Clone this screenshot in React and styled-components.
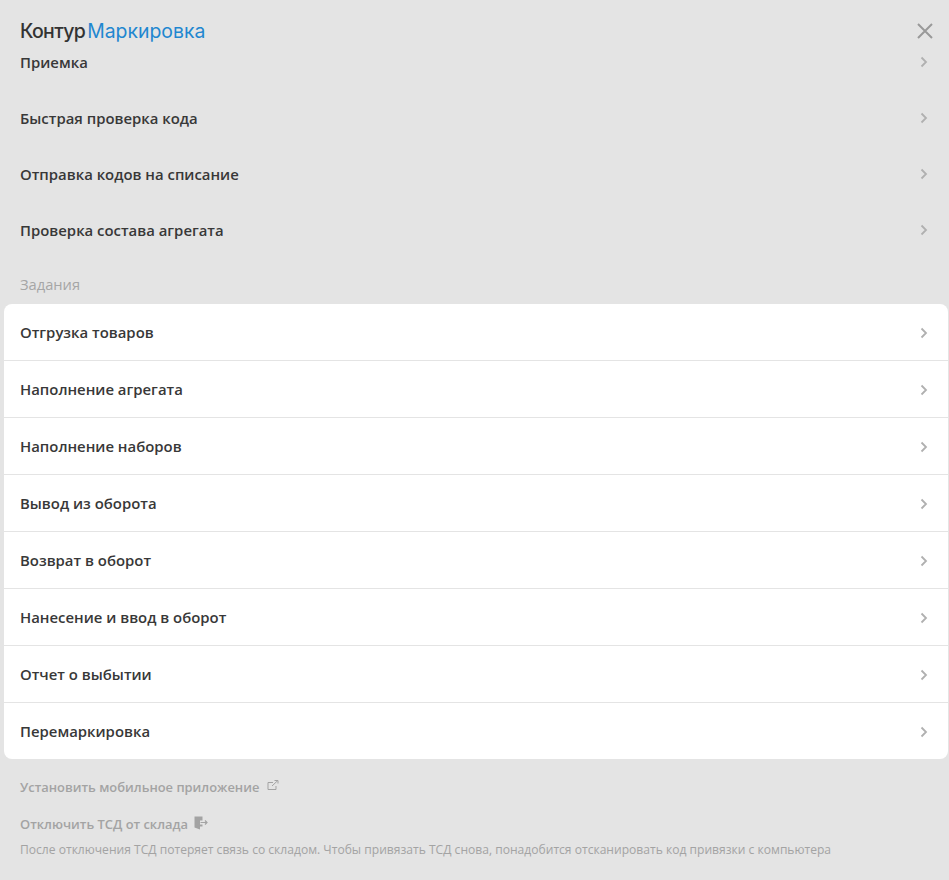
import React from 'react';
import styled, { createGlobalStyle } from 'styled-components';

const GlobalStyle = createGlobalStyle`
  html, body {
    margin: 0;
    padding: 0;
    background: #e4e4e4;
  }
  * { box-sizing: border-box; }
`;

const scanItems = ['Приемка', 'Быстрая проверка кода', 'Отправка кодов на списание', 'Проверка состава агрегата'];
const taskItems = [
  'Отгрузка товаров',
  'Наполнение агрегата',
  'Наполнение наборов',
  'Вывод из оборота',
  'Возврат в оборот',
  'Нанесение и ввод в оборот',
  'Отчет о выбытии',
  'Перемаркировка',
];

const Chevron = () => (
  <ChevronIcon width="8" height="12" viewBox="0 0 8 12" fill="none">
    <path d="M1.5 1.5 L6 6 L1.5 10.5" stroke="currentColor" strokeWidth="1.8" />
  </ChevronIcon>
);

const App = () => (
  <>
    <GlobalStyle />
    <Page>
      <Header>
        <Logo>
          <LogoBrand>Контур</LogoBrand>
          <LogoProduct>Маркировка</LogoProduct>
        </Logo>
        <CloseButton aria-label="Закрыть">
          <svg width="16" height="16" viewBox="0 0 16 16" fill="none">
            <path d="M1 1 L15 15 M15 1 L1 15" stroke="currentColor" strokeWidth="2" />
          </svg>
        </CloseButton>
      </Header>

      <PlainList>
        {scanItems.map((item) => (
          <Row key={item}>
            <RowTitle>{item}</RowTitle>
            <Chevron />
          </Row>
        ))}
      </PlainList>

      <SectionTitle>Задания</SectionTitle>

      <Card>
        {taskItems.map((item) => (
          <CardRow key={item}>
            <RowTitle>{item}</RowTitle>
            <Chevron />
          </CardRow>
        ))}
      </Card>

      <Footer>
        <FooterLink>
          Установить мобильное приложение
          <svg width="12" height="10" viewBox="0 0 12 10" fill="none">
            <path d="M6 2.5 H1 V9.5 H9 V6 M5 6 L10.5 0.8 M7.5 0.5 H11 V3.5" stroke="currentColor" strokeWidth="1" />
          </svg>
        </FooterLink>
        <FooterLink $second>
          Отключить ТСД от склада
          <svg width="14" height="14" viewBox="0 0 14 14" fill="none">
            <path d="M0.5 0.5 H8.5 V4.5 H6 V8.5 H8.5 V10.5 H6 V13.5 L0.5 11.5 Z" fill="currentColor" />
            <path d="M6.5 6.5 H13 M11 4.5 L13 6.5 L11 8.5" stroke="currentColor" strokeWidth="1.2" />
          </svg>
        </FooterLink>
        <Hint>После отключения ТСД потеряет связь со складом. Чтобы привязать ТСД снова, понадобится отсканировать код привязки с компьютера</Hint>
      </Footer>
    </Page>
  </>
);

const Page = styled.div`
  position: relative;
  height: 880px;
  overflow: hidden;
  padding-top: 34px;
  background: #e4e4e4;
  font-family: 'Open Sans', 'Noto Sans', sans-serif;
  color: #2b2b2b;
`;

const Header = styled.header`
  position: absolute;
  top: 0;
  left: 0;
  right: 0;
  height: 52px;
  padding: 9px 16px 0 20px;
  display: flex;
  align-items: center;
  justify-content: space-between;
  background: #e4e4e4;
`;

const Logo = styled.div`
  display: flex;
  align-items: baseline;
  gap: 2px;
  font-family: 'Inter', sans-serif;
`;

const LogoBrand = styled.span`
  font-size: 19.5px;
  font-weight: 500;
  letter-spacing: -0.65px;
  color: #333333;
`;

const LogoProduct = styled.span`
  font-size: 19.4px;
  font-weight: 400;
  color: #1f87d0;
`;

const CloseButton = styled.div`
  display: flex;
  color: #999999;
`;

const PlainList = styled.div`
  display: flex;
  flex-direction: column;
`;

const Row = styled.div`
  height: 56px;
  padding: 0 21px 0 20px;
  display: flex;
  align-items: center;
  justify-content: space-between;
`;

const RowTitle = styled.span`
  font-size: 14.9px;
  font-weight: 600;
  color: #383838;
`;

const ChevronIcon = styled.svg`
  color: #b0b0b0;
`;

const SectionTitle = styled.div`
  height: 46px;
  padding: 16px 20px 0;
  font-size: 14.7px;
  line-height: 20px;
  color: #a6a6a6;
`;

const Card = styled.div`
  margin: 0 1px 0 4px;
  border-radius: 8px;
  background: #ffffff;
  display: flex;
  flex-direction: column;
`;

const CardRow = styled(Row)`
  height: 57px;
  padding: 0 20px 0 16px;
  border-bottom: 1px solid #e4e4e4;

  ${ChevronIcon} {
    margin-top: 2px;
  }

  &:last-child {
    height: 56px;
    border-bottom: none;
  }
`;

const Footer = styled.div`
  padding: 18px 20px 0;
  display: flex;
  flex-direction: column;
`;

const FooterLink = styled.div`
  display: flex;
  align-items: center;
  gap: ${(p) => (p.$second ? '6px' : '8px')};
  margin-top: ${(p) => (p.$second ? '17px' : '0')};
  font-size: 12.9px;
  line-height: 20px;
  font-weight: 600;
  color: #a3a3a3;

  svg {
    margin-top: ${(p) => (p.$second ? '-2px' : '-4px')};
  }
`;

const Hint = styled.div`
  margin-top: 7px;
  font-size: 12.08px;
  line-height: 18px;
  color: #a3a3a3;
`;

export default App;
